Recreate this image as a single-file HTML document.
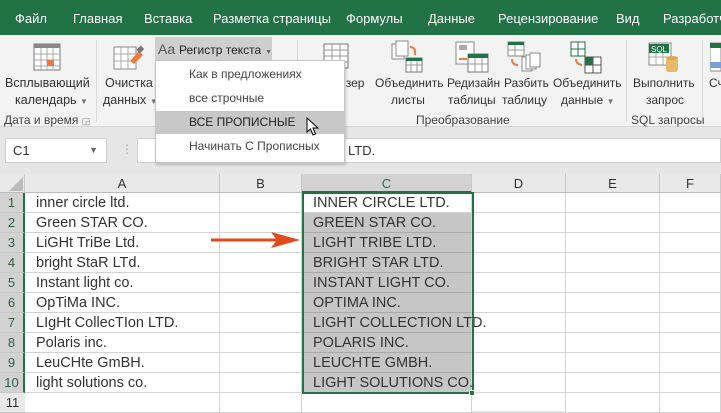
<!DOCTYPE html>
<html><head><meta charset="utf-8"><style>
*{margin:0;padding:0;box-sizing:border-box}
body{width:721px;height:411px;overflow:hidden;background:#e6e6e6;font-family:"Liberation Sans",sans-serif;position:relative}
.a{position:absolute;white-space:nowrap}
.tab{color:#fff;font-size:13px;top:11px}
.rl{font-size:12.5px;color:#333;text-align:center}
.rs{font-size:12px}
.gl{font-size:12px;color:#444}
.ch{position:absolute;top:174px;height:19px;border-right:1px solid #c8c8c8;border-bottom:1px solid #bdbdbd;background:#e9e9e9;text-align:center;font-size:13px;color:#333;line-height:19px}
.rh{position:absolute;left:0;width:25px;height:20px;border-bottom:1px solid #c8c8c8;background:#e9e9e9;text-align:center;font-size:13px;color:#2f5f3f;line-height:20px}
.cell{position:absolute;height:20px;border-bottom:1px solid #d4d4d4;border-right:1px solid #d4d4d4;background:#fff;font-size:14.5px;color:#333;line-height:20px;padding-left:11px;white-space:nowrap}
.mi{position:absolute;left:156px;width:188px;height:23px;font-size:12px;color:#444;line-height:23px;padding-left:33px}
</style></head><body>
<div class="a" style="left:0;top:0;width:721px;height:35px;background:#217346"></div>
<div class="a tab" style="left:15px">Файл</div>
<div class="a tab" style="left:73px">Главная</div>
<div class="a tab" style="left:144px">Вставка</div>
<div class="a tab" style="left:213px">Разметка страницы</div>
<div class="a tab" style="left:346px">Формулы</div>
<div class="a tab" style="left:428px">Данные</div>
<div class="a tab" style="left:498px">Рецензирование</div>
<div class="a tab" style="left:616px">Вид</div>
<div class="a tab" style="left:663px">Разработч</div>
<div class="a" style="left:0;top:35px;width:721px;height:92px;background:#f3f3f3;border-bottom:1px solid #d6d6d6"></div>
<div class="a" style="left:96px;top:40px;width:1px;height:82px;background:#dadada"></div>
<div class="a" style="left:297px;top:40px;width:1px;height:82px;background:#dadada"></div>
<div class="a" style="left:626px;top:40px;width:1px;height:82px;background:#dadada"></div>
<div class="a" style="left:702px;top:40px;width:1px;height:82px;background:#dadada"></div>
<svg class="a" style="left:33px;top:43px" width="30" height="30"><rect x="1" y="1" width="26" height="26" fill="#fff" stroke="#777"/><rect x="1" y="1" width="26" height="4" fill="#888"/><path d="M1 11H27M1 17H27M1 23H27M8 5V27M14 5V27M20 5V27" stroke="#aaa"/><rect x="14" y="17" width="7" height="6" fill="#ef7a3f"/></svg>
<div class="a rl" style="left:5px;top:76px">Всплывающий</div>
<div class="a rl" style="left:15px;top:93px">календарь <span style="font-size:8px;color:#777">▼</span></div>
<div class="a gl" style="left:4px;top:113px">Дата и время <span style="font-size:9px;color:#888">◲</span></div>
<svg class="a" style="left:113px;top:43px" width="32" height="30"><rect x="1" y="4" width="22" height="22" fill="#fff" stroke="#888"/><path d="M1 11H23M1 18H23M8 4V26M15 4V26" stroke="#aaa"/><path d="M17 18L26 8L30 12L21 21Z" fill="#ef7a3f"/><rect x="25" y="3" width="5" height="6" fill="#777" transform="rotate(45 27 6)"/></svg>
<div class="a rl" style="left:105px;top:76px">Очистка</div>
<div class="a rl" style="left:103px;top:93px">данных <span style="font-size:8px;color:#777">▼</span></div>
<svg class="a" style="left:322px;top:42px" width="30" height="30"><rect x="2" y="2" width="24" height="24" fill="#fff" stroke="#777"/><path d="M2 8H26M2 14H26M2 20H26M10 2V26M18 2V26" stroke="#999"/></svg>
<svg class="a" style="left:390px;top:40px" width="36" height="36"><rect x="2" y="4" width="12" height="15" fill="#fff" stroke="#888"/><rect x="6" y="1" width="12" height="15" fill="#fff" stroke="#888"/><path d="M20 7q6 0 5 8" stroke="#ef7a3f" stroke-width="2" fill="none"/><rect x="16" y="18" width="16" height="14" fill="#fff" stroke="#777"/><rect x="16" y="18" width="16" height="3" fill="#217346"/><path d="M16 25H32M21 21V32M27 21V32" stroke="#999"/></svg>
<svg class="a" style="left:455px;top:41px" width="36" height="34"><rect x="1" y="1" width="18" height="22" fill="#fff" stroke="#888"/><rect x="4" y="4" width="8" height="5" fill="#aaa"/><path d="M4 18h8" stroke="#ef7a3f" stroke-width="2"/><rect x="13" y="13" width="20" height="18" fill="#fff" stroke="#777"/><rect x="13" y="13" width="20" height="4" fill="#217346"/><path d="M13 23H33M20 17V31M27 17V31" stroke="#999"/></svg>
<svg class="a" style="left:507px;top:41px" width="36" height="34"><rect x="1" y="1" width="16" height="14" fill="#fff" stroke="#888"/><rect x="1" y="1" width="16" height="3" fill="#217346"/><path d="M1 9H17M8 4V15" stroke="#999"/><path d="M5 18q0 6 6 6" stroke="#ef7a3f" stroke-width="2" fill="none"/><rect x="15" y="16" width="10" height="14" fill="#fff" stroke="#888"/><rect x="19" y="14" width="10" height="14" fill="#fff" stroke="#888"/><rect x="23" y="12" width="10" height="14" fill="#fff" stroke="#888"/></svg>
<svg class="a" style="left:570px;top:41px" width="36" height="34"><rect x="1" y="1" width="14" height="14" fill="#fff" stroke="#217346"/><path d="M1 8H15M8 1V15" stroke="#217346"/><path d="M6 18q0 5 6 6" stroke="#ef7a3f" stroke-width="2" fill="none"/><rect x="15" y="16" width="16" height="16" fill="#fff" stroke="#555"/><rect x="15" y="16" width="8" height="8" fill="#217346"/><path d="M15 24H31M23 16V32" stroke="#555"/></svg>
<svg class="a" style="left:648px;top:42px" width="34" height="34"><rect x="1" y="1" width="22" height="22" fill="#fff" stroke="#888"/><path d="M1 8H23M1 15H23M8 1V23M15 1V23" stroke="#aaa"/><rect x="1" y="2" width="20" height="9" fill="#217346"/><text x="3" y="10" font-size="8" fill="#fff" font-family="Liberation Sans">SQL</text><rect x="18" y="16" width="12" height="14" rx="3" fill="#e6bb68"/><ellipse cx="24" cy="16" rx="6" ry="2" fill="#d7a954"/></svg>
<svg class="a" style="left:710px;top:42px" width="11" height="32"><rect x="0" y="1" width="11" height="28" fill="#fff" stroke="#888"/><rect x="0" y="1" width="11" height="5" fill="#217346"/><rect x="0" y="20" width="11" height="6" fill="#7a9fd6"/></svg>
<div class="a rl rs" style="left:339px;top:76px">йзер</div>
<div class="a rl rs" style="left:375px;top:76px">Объединить</div>
<div class="a rl rs" style="left:391px;top:93px">листы</div>
<div class="a rl rs" style="left:447px;top:76px">Редизайн</div>
<div class="a rl rs" style="left:448px;top:93px">таблицы</div>
<div class="a rl rs" style="left:504px;top:76px">Разбить</div>
<div class="a rl rs" style="left:502px;top:93px">таблицу</div>
<div class="a rl rs" style="left:553px;top:76px">Объединить</div>
<div class="a rl rs" style="left:561px;top:93px">данные <span style="font-size:8px;color:#777">▼</span></div>
<div class="a rl rs" style="left:633px;top:76px">Выполнить</div>
<div class="a rl rs" style="left:646px;top:93px">запрос</div>
<div class="a rl rs" style="left:709px;top:76px">Сч</div>
<div class="a gl" style="left:416px;top:113px">Преобразование</div>
<div class="a gl" style="left:631px;top:113px">SQL запросы</div>
<div class="a" style="left:5px;top:138px;width:102px;height:25px;background:#fff;border:1px solid #cfcfcf;font-size:13px;color:#333;line-height:23px;padding-left:7px">C1<span style="position:absolute;right:8px;top:0;font-size:9px;color:#666">▼</span></div>
<div class="a" style="left:121px;top:142px;color:#aaa;font-size:12px">⋮</div>
<div class="a" style="left:137px;top:138px;width:584px;height:25px;background:#fff;border:1px solid #cfcfcf;font-size:13px;color:#333;line-height:23px;padding-left:210px">LTD.</div>
<div class="a" style="left:0;top:174px;width:721px;height:237px;background:#fff"></div>
<div class="ch" style="left:0;width:25px;background:#e9e9e9"><svg width="14" height="14" style="position:absolute;left:9px;top:3px"><path d="M14 0V14H0Z" fill="#bbb"/></svg></div>
<div class="ch" style="left:25px;width:195px">A</div>
<div class="ch" style="left:220px;width:82px">B</div>
<div class="ch" style="left:302px;width:170px;background:#d2d2d2;color:#217346;border-bottom:2px solid #217346">C</div>
<div class="ch" style="left:472px;width:94px">D</div>
<div class="ch" style="left:566px;width:94px">E</div>
<div class="ch" style="left:660px;width:61px">F</div>
<div id="g"></div>
<script>
var A=["inner circle ltd.","Green STAR CO.","LiGHt TriBe Ltd.","bright StaR LTd.","Instant light co.","OpTiMa INC.","LIgHt CollecTIon LTD.","Polaris inc.","LeuCHte GmBH.","light solutions co."];
var h="";
for(var i=0;i<11;i++){var y=193+i*20;
h+='<div class="rh" style="top:'+y+'px;'+(i<10?'background:#d2d2d2;border-right:2px solid #217346':'color:#333')+'">'+(i+1)+'</div>';
h+='<div class="cell" style="left:25px;top:'+y+'px;width:195px">'+(A[i]||"")+'</div>';
h+='<div class="cell" style="left:220px;top:'+y+'px;width:82px"></div>';
h+='<div class="cell" style="left:302px;top:'+y+'px;width:170px;overflow:visible;'+(i>0&&i<10?'background:#c6c6c6;border-bottom-color:#aaa':'')+'">'+(A[i]?A[i].toUpperCase():"")+'</div>';
h+='<div class="cell" style="left:472px;top:'+y+'px;width:94px;background:transparent"></div>';
h+='<div class="cell" style="left:566px;top:'+y+'px;width:94px"></div>';
h+='<div class="cell" style="left:660px;top:'+y+'px;width:61px"></div>';}
document.getElementById("g").innerHTML=h;
</script>
<div class="a" style="left:302px;top:192px;width:172px;height:202px;border:2px solid #217346"></div>
<div class="a" style="left:469px;top:390px;width:6px;height:6px;background:#217346;border:1px solid #fff"></div>
<svg class="a" style="left:209px;top:230px" width="92" height="20"><path d="M2 10H70" stroke="#e04a1a" stroke-width="3"/><path d="M62 2L91 10L62 18L68 10Z" fill="#e04a1a"/></svg>
<div class="a" style="left:155px;top:37px;width:117px;height:24px;background:#cfcfcf"></div>
<div class="a" style="left:158px;top:41px;font-size:14px;color:#555">Aa <span style="font-size:12px;color:#222">Регистр текста</span> <span style="font-size:7px;color:#666">▼</span></div>
<div class="a" style="left:155px;top:60px;width:190px;height:103px;background:#fff;border:1px solid #c6c6c6;box-shadow:1px 2px 3px rgba(0,0,0,.2)"></div>
<div class="mi" style="top:63px">Как в предложениях</div>
<div class="mi" style="top:87px">все строчные</div>
<div class="mi" style="top:111px;background:#c8c8c8;color:#222">ВСЕ ПРОПИСНЫЕ</div>
<div class="mi" style="top:135px">Начинать С Прописных</div>
<svg class="a" style="left:306px;top:117px" width="14" height="20"><path d="M1 1V15L4.5 12L7 18L9.5 17L7 11H12Z" fill="#fff" stroke="#000"/></svg>
</body></html>
